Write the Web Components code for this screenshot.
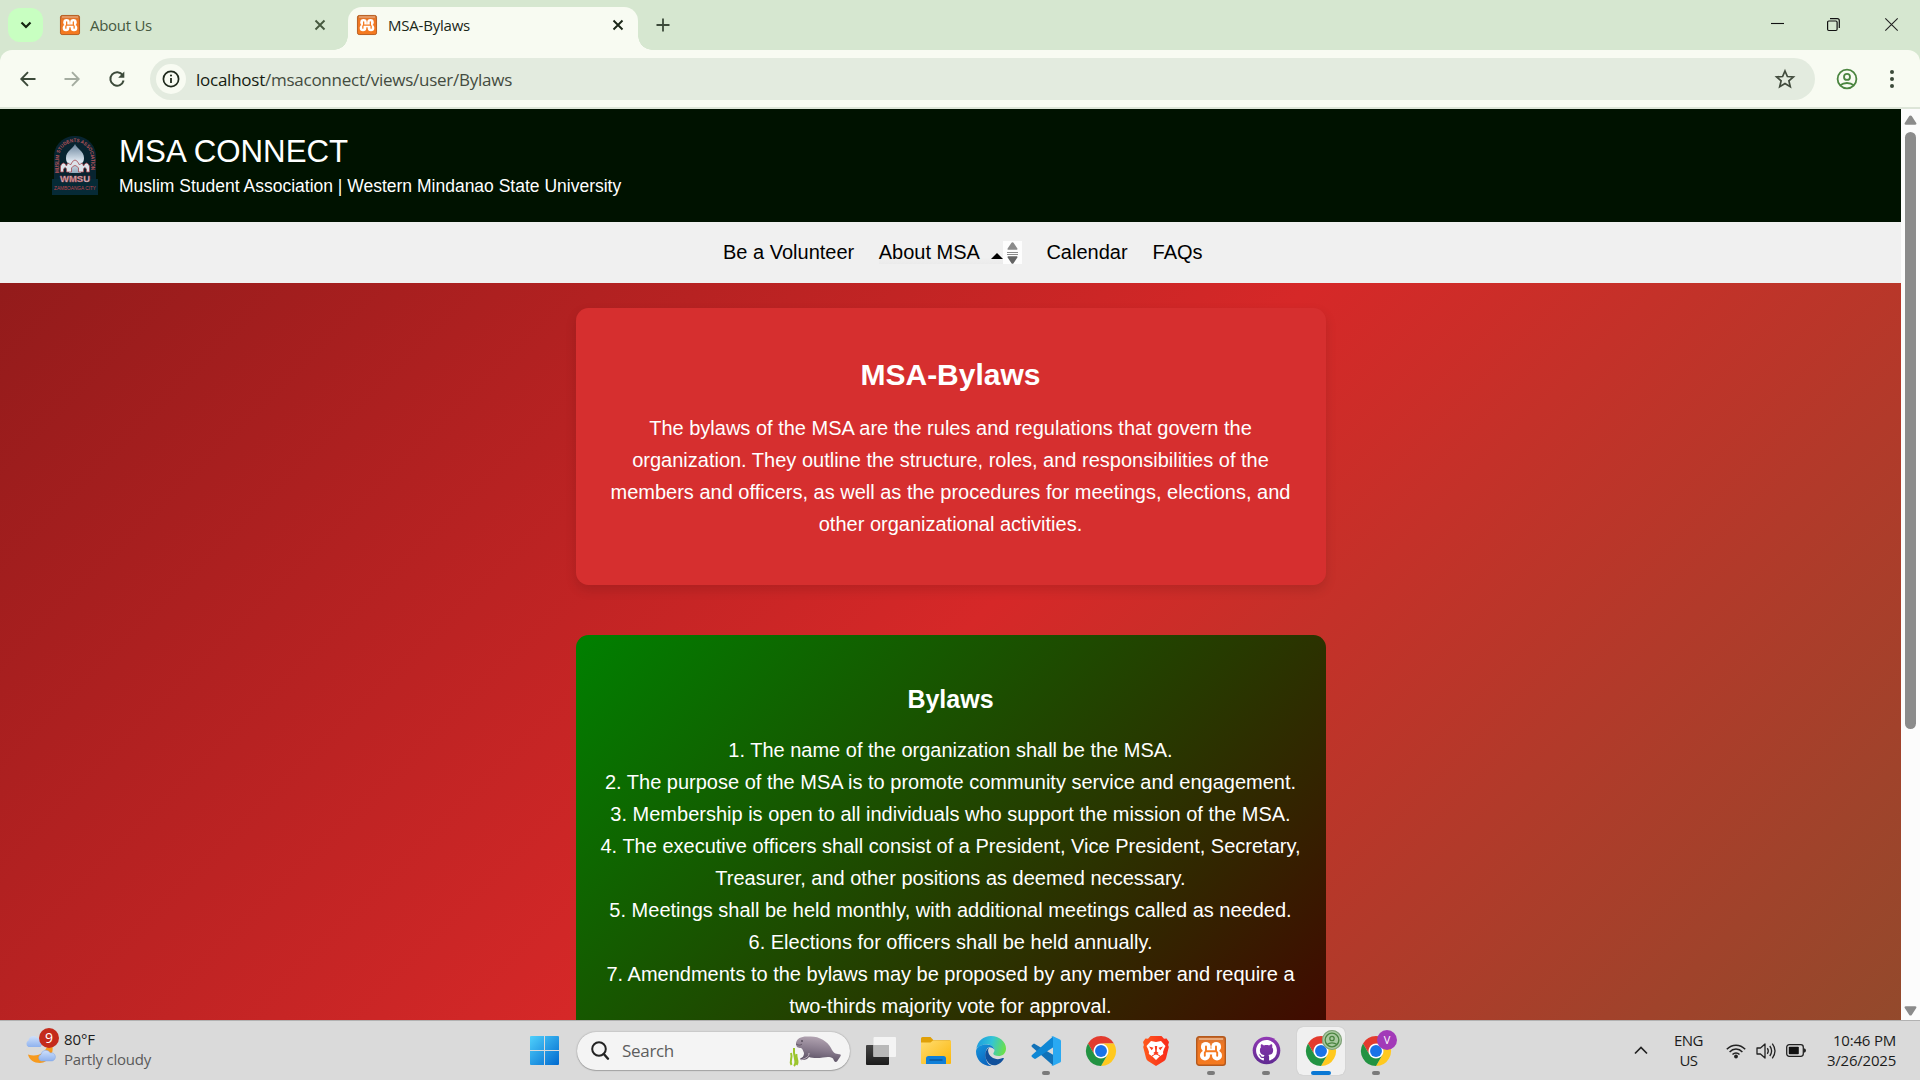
<!DOCTYPE html>
<html lang="en">
<head>
<meta charset="utf-8">
<title>MSA-Bylaws</title>
<style>
html,body{margin:0;width:1920px;height:1080px;overflow:hidden;background:#d6e7d0}
</style>
</head>
<body>
<desktop-screen></desktop-screen>

<script>
const define = (name, html, setup) => customElements.define(name, class extends HTMLElement {
  connectedCallback() {
    if (this.shadowRoot) return;
    const t = document.createElement('template');
    t.innerHTML = html;
    this.attachShadow({mode: 'open'}).appendChild(t.content.cloneNode(true));
    if (setup) setup(this);
  }
});

const UI = `font-family:"Open Sans","Noto Sans",sans-serif;`;

/* One line of text, tracked so that it fills the given width. */
define('fit-text', `<style>:host{display:block;white-space:nowrap;line-height:20px}span{display:inline-block}</style><span><slot></slot></span>`, el => {
  const s = el.shadowRoot.querySelector('span');
  const w = +el.getAttribute('w'), n = el.textContent.length;
  if (w) s.style.letterSpacing = ((w - s.getBoundingClientRect().width) / n).toFixed(3) + 'px';
});

const xampp = `<linearGradient id="x" x1="0" y1="0" x2="0" y2="1"><stop offset="0" stop-color="#c9733a"/><stop offset=".25" stop-color="#ee7623"/><stop offset="1" stop-color="#f57a20"/></linearGradient><rect x=".7" y=".7" width="28.6" height="28.6" rx="2.5" fill="url(#x)" stroke="#b5591c" stroke-width="1.4"/><path d="M3 3h24" stroke="#f3c09a" stroke-width="1.4"/><g fill="#fff"><circle cx="9.800" cy="10.800" r="4.900"/><circle cx="20.200" cy="10.800" r="4.900"/><circle cx="9" cy="19.500" r="5"/><circle cx="21" cy="19.500" r="5"/><path d="M9 12.500h12v6H9z"/></g><path d="M10 10.500v3.500q0 1.500-1.200 2.700v3M20 10.500v3.500q0 1.500 1.200 2.700v3M10 15.200h10" fill="none" stroke="#f57a20" stroke-width="1.900" stroke-linecap="round"/>`;
const chrome = `<g transform="scale(.625)"><circle cx="24" cy="24" r="12" fill="#fff"/><path fill="#e33b2e" d="M24 12H44.781A23.994 23.994 0 0 0 3.217 12.003L13.608 30l.009-.002A11.985 11.985 0 0 1 24 12Z"/><path fill="#ffc91f" d="M34.391 30.003 24.001 48A23.994 23.994 0 0 0 44.780 12.003H23.999l-.003.009A11.985 11.985 0 0 1 34.391 30.003Z"/><path fill="#229342" d="M13.609 30.003 3.218 12.006A23.994 23.994 0 0 0 24.003 48L34.393 30.003l-.007-.007a11.985 11.985 0 0 1-20.778.007Z"/><circle cx="24" cy="24" r="9.500" fill="#1a73e8"/></g>`;

const ICONS = {
  xampp: ['0 0 30 30', xampp],
  chrome: ['0 0 30 30', chrome],
  tabx: ['0 0 12 12', `<path d="M1.500 1.500l9 9M10.500 1.500l-9 9" stroke="currentColor" stroke-width="1.900" fill="none"/>`],
  plus: ['0 0 14 14', `<path d="M7 .5v13M.5 7h13" stroke="#3c4a3a" stroke-width="1.800"/>`],
  chev: ['0 0 12 8', `<path d="M1.500 1.500L6 6l4.500-4.500" stroke="#14240f" stroke-width="2.200" fill="none"/>`],
  back: ['0 0 16 16', `<path d="M15.500 8H1.500M8 1.200L1.300 8 8 14.800" stroke="currentColor" stroke-width="1.900" fill="none"/>`],
  fwd: ['0 0 16 16', `<path d="M.5 8h14M8 1.200L14.700 8 8 14.800" stroke="currentColor" stroke-width="1.900" fill="none"/>`],
  reload: ['0 0 16 16', `<path d="M13.700 4.300A6.700 6.700 0 1 0 14.600 9.500" stroke="#3c4a3a" stroke-width="2" fill="none"/><path d="M15.300.5v6.200H9.200z" fill="#3c4a3a"/>`],
  info: ['0 0 18 18', `<circle cx="9" cy="9" r="7.600" fill="none" stroke="#1f2a1c" stroke-width="1.700"/><path d="M9 8v5" stroke="#1f2a1c" stroke-width="1.800"/><circle cx="9" cy="5.500" r="1.050" fill="#1f2a1c"/>`],
  star: ['0 0 20 20', `<path d="M10 2l2.400 5.500 6 .5-4.500 3.900 1.400 5.900-5.300-3.200-5.300 3.200 1.400-5.900L1.600 8l6-.5z" fill="none" stroke="#414b3d" stroke-width="1.700"/>`],
  person: ['0 0 22 22', `<g fill="none" stroke="#4b8540" stroke-width="1.800"><circle cx="11" cy="11" r="9.400"/><circle cx="11" cy="8.900" r="3"/><path d="M4.300 17.300c3.600-3.100 9.800-3.100 13.400 0"/></g>`],
  dots: ['0 0 6 20', `<g fill="#3c4a3a"><circle cx="3" cy="3" r="2"/><circle cx="3" cy="10" r="2"/><circle cx="3" cy="17" r="2"/></g>`],
  min: ['0 0 13 13', `<path d="M0 5.500h13" stroke="#111" stroke-width="1.100"/>`],
  max: ['0 0 13 13', `<rect x=".6" y="3" width="9.500" height="9.500" rx="1.200" fill="none" stroke="#111" stroke-width="1.200"/><path d="M3 .7h7.300a2 2 0 0 1 2 2V10" fill="none" stroke="#111" stroke-width="1.200"/>`],
  close: ['0 0 13 13', `<path d="M.3.3l12.400 12.400M12.700.3L.3 12.700" stroke="#222" stroke-width="1.100"/>`],
  win: ['0 0 29 29', `<linearGradient id="w" x1="0" y1="0" x2="1" y2="1"><stop offset="0" stop-color="#4fd0fb"/><stop offset="1" stop-color="#0069cf"/></linearGradient><path fill="url(#w)" d="M1 0h13v14H0V1a1 1 0 0 1 1-1zM15 0h13a1 1 0 0 1 1 1v13H15zM0 15h14v14H1a1 1 0 0 1-1-1zM15 15h14v13a1 1 0 0 1-1 1H15z"/>`],
  search: ['0 0 18 19', `<circle cx="8" cy="8" r="6.800" fill="none" stroke="#222" stroke-width="2"/><path d="M12.800 13l4.200 4.700" stroke="#222" stroke-width="2.400" stroke-linecap="round"/>`],
  manatee: ['0 0 52 30', `<linearGradient id="m" x1=".3" y1="0" x2=".1" y2="1"><stop offset="0" stop-color="#b0a2b0"/><stop offset=".5" stop-color="#85788a"/><stop offset="1" stop-color="#51485b"/></linearGradient><path d="M7 7C8 2 13 0 20 .6 30 0 38 5 42 12c2 4 3 5.500 7 6 3 .3 3.500 1 2 3l-3 4.500c-2 1.300-3-.5-4-3-3-2-6-1.500-10-1-6 1-11 .5-14-.5-1 2-4 3-6 3-3 0-4-1.500-1-2.500 1.500-.7 2-3 2-4.500-1-2-1-4-3-5-3 0-5-.5-5-5z" fill="url(#m)"/><circle cx="13" cy="5" r=".8" fill="#2a2330"/><path d="M7 8c3 2 5 1 6 0" stroke="#655868" fill="none"/><path d="M20 17c0 4-3 5-8 7" stroke="#c3b6c2" stroke-width="1" fill="none"/><path d="M2.500 29C0 25 4 22 2 17M5 30c4-4-1-8 0-18M7.500 29c3-4-1-6 0-11" stroke="#9bc52c" stroke-width="2" fill="none"/>`],
  task: ['0 0 30 28', `<linearGradient id="t" x1="0" y1="0" x2="0" y2="1"><stop offset="0" stop-color="#444"/><stop offset="1" stop-color="#1c1c1c"/></linearGradient><rect x="0" y="8" width="23" height="20" rx="1" fill="url(#t)"/><rect x="7.500" y="0" width="22.500" height="20" rx="1" fill="#f4f4f4"/><path d="M7.500 8H23v12H7.500z" fill="#b9b9b9"/>`],
  folder: ['0 0 30 27', `<linearGradient id="f" x1="0" y1="0" x2="1" y2="1"><stop offset="0" stop-color="#ffdc70"/><stop offset="1" stop-color="#fbb70b"/></linearGradient><path d="M0 1.500A1.500 1.500 0 0 1 1.500 0h8l3 3.200H28.500a1 1 0 0 1 1 1V10H0z" fill="#e0a008"/><path d="M0 5.500h9.500l2.500-2H29a1 1 0 0 1 1 1V26a1 1 0 0 1-1 1H1a1 1 0 0 1-1-1z" fill="url(#f)"/><path d="M5 27v-5.500A2.500 2.500 0 0 1 7.500 19h15a2.500 2.500 0 0 1 2.500 2.500V27z" fill="#0f7fd8"/><path d="M8.500 23h13" stroke="#0a4f94" stroke-width="1.300"/>`],
  edge: ['0 0 30 30', `<linearGradient id="e1" x1="0" y1=".3" x2="1" y2=".5"><stop offset="0" stop-color="#1c9be0"/><stop offset=".5" stop-color="#33c4d6"/><stop offset="1" stop-color="#6be04a"/></linearGradient><linearGradient id="e2" x1="0" y1="0" x2=".6" y2="1"><stop offset="0" stop-color="#1797dd"/><stop offset="1" stop-color="#0a62bd"/></linearGradient><path d="M.3 13C1.500 5 7.500 0 15 0c8.500 0 15 6 15 12.500 0 5-3.500 7.500-7.500 7.500-3.200 0-5.200-1.200-5.200-2.300 0-.9 1.200-1.400 1.200-3.600C18.500 11 15 8.500 11 8.500 6 8.500 2 10.500.3 13z" fill="url(#e1)"/><path d="M0 15.500C0 11 5 8.400 10.500 8.400c5 0 8 3 8 5.700-1-2-3-2.900-5-2.900C7.500 11.200 8 30 17 29.800 7 31 0 24 0 15.500z" fill="url(#e2)"/><path d="M13.500 11.300C9.500 13.500 8 19 10.500 24c2 4 6 6.300 10 5 3-1 5.500-3.200 7.200-6 .4-.8-.1-1.300-.9-.9-6 3-13.500-.1-14.600-6.500-.3-1.600.2-3.200 1.300-4.300z" fill="#11519c"/>`],
  code: ['0 0 30 30', `<path d="M3 7.500L1 9a1.300 1.300 0 0 0 0 2L22 29.500l3-9z" fill="#1272b8"/><path d="M3 22.500L1 21a1.300 1.300 0 0 1 0-2L22 .5l3 9L5 22.500a1.500 1.500 0 0 1-2 0z" fill="#0f87d4"/><path d="M22 .3L29 3.500a1.800 1.800 0 0 1 1 1.600v19.800a1.800 1.800 0 0 1-1 1.600l-7 3.200c-1 .3-1.600 0-2-.5 1 .5 2 0 2-1.200V2c0-1-1-1.700-2-1.200.5-.6 1-.8 2-.5z" fill="#2aa9f2"/>`],
  brave: ['0 0 26 30', `<linearGradient id="b"><stop offset="0" stop-color="#ff5a1c"/><stop offset="1" stop-color="#f9291b"/></linearGradient><path d="M7.500 0h11L21 2.800l2.600-.2L26 6l-.9 3 .7 2-2.700 11a5 5 0 0 1-2 3L13 30l-8-5a5 5 0 0 1-2-3L.200 11l.7-2L0 6l2.400-3.400 2.600.2z" fill="url(#b)"/><path d="M8 5l5 1 5-1 4.500 5-1.500 3-1 3 .2 2-3.700 2.500L13 24l-3.500-3.500L5.800 18l.2-2-1-3-1.500-3z" fill="#fff"/><path d="M6 10.500l4.500 1.200-1.800 2.500zM20 10.500l-4.500 1.200 1.800 2.500zM11.800 10h2.400l-.5 5.500 2 1.500-2.700 1.800-2.700-1.800 2-1.500z" fill="#fb3a1b"/><path d="M9 20l4-2.300L17 20" stroke="#fb3a1b" fill="none"/>`],
  github: ['0 0 30 30', `<linearGradient id="g" x1="0" y1="0" x2="0" y2="1"><stop offset="0" stop-color="#9139b4"/><stop offset="1" stop-color="#5f2a91"/></linearGradient><circle cx="15" cy="15" r="14.300" fill="url(#g)"/><path transform="translate(4.200 4.200) scale(1.350)" fill="#fff" d="M8 0C3.580 0 0 3.580 0 8c0 3.540 2.290 6.530 5.470 7.590.4.070.55-.17.55-.38 0-.19-.01-.82-.01-1.490-2.010.37-2.530-.49-2.690-.94-.09-.23-.48-.94-.82-1.130-.28-.15-.68-.52-.01-.53.63-.01 1.080.58 1.230.82.72 1.210 1.870.87 2.330.66.070-.52.28-.87.51-1.070-1.780-.2-3.640-.89-3.640-3.950 0-.87.31-1.590.82-2.150-.08-.2-.36-1.020.08-2.120 0 0 .67-.21 2.200.82.64-.18 1.320-.27 2-.27.68 0 1.360.09 2 .27 1.530-1.040 2.200-.82 2.200-.82.44 1.100.16 1.920.08 2.120.51.56.82 1.270.82 2.150 0 3.070-1.870 3.750-3.650 3.950.29.25.54.73.54 1.480 0 1.070-.01 1.930-.01 2.200 0 .21.15.46.55.38A8.010 8.010 0 0 0 16 8c0-4.420-3.580-8-8-8z"/>`],
  up: ['0 0 14 9', `<path d="M1 7.500L7 1.500l6 6" fill="none" stroke="#222" stroke-width="1.700"/>`],
  wifi: ['0 0 20 16', `<g fill="none" stroke="#222" stroke-width="1.500"><path d="M.8 6.200c5.200-5.400 13.200-5.400 18.400 0M3.600 8.900c3.700-3.800 9.100-3.800 12.800 0M6.500 11.500c2-2 5-2 7 0"/></g><circle cx="10" cy="13.500" r="1.900" fill="#222"/>`],
  vol: ['0 0 20 18', `<g fill="none" stroke="#222" stroke-width="1.300"><path d="M1 6v6h3.500L9 16V2L4.500 6z" stroke-linejoin="round"/><path d="M11.300 6.200q2 2.800 0 5.600M13.800 4q3.600 5 0 10M16.300 1.700q5.400 7.300 0 14.600"/></g>`],
  bat: ['0 0 20 13', `<rect x=".7" y=".7" width="16.600" height="11.600" rx="2.500" fill="none" stroke="#222" stroke-width="1.300"/><rect x="2.800" y="2.800" width="10" height="7.400" rx=".8" fill="#111"/><path d="M18 4.200q2 .2 2 2.300t-2 2.300z" fill="#222"/>`],
  weather: ['0 0 31 31', `<linearGradient id="c" x1="0" y1="0" x2="0" y2="1"><stop offset="0" stop-color="#cfe0fb"/><stop offset="1" stop-color="#8fb2ee"/></linearGradient><path d="M26 11c5 8-2 20-11 20-6 0-11-3.500-12-8.500 9 3 18-1 20-11z" fill="#f79a1d"/><path d="M3.500 15a3.600 3.600 0 0 1 0-6.500 5 5 0 0 1 9-2.500c4 0 5 3 5 6l-2 3z" fill="url(#c)"/><path d="M16 29a3.500 3.500 0 0 1 0-6.600 5 5 0 0 1 9.300-1.500 4 4 0 0 1 2 8z" fill="url(#c)" stroke="#7fa6e8" stroke-width=".5"/>`],
  sup: ['0 0 14 11', `<path d="M5.700 1.200a1.500 1.500 0 0 1 2.600 0l4.900 7.700c.6 1-.1 1.800-1.100 1.800H1.900c-1 0-1.700-.8-1.100-1.800z" fill="#8b8b8b"/>`],
  sdown: ['0 0 14 11', `<path d="M5.700 9.800a1.500 1.500 0 0 0 2.600 0l4.900-7.700c.6-1-.1-1.800-1.100-1.800H1.900c-1 0-1.700.8-1.100 1.800z" fill="#8b8b8b"/>`]
};
define('ui-icon', `<style>:host{display:block;flex:none}svg{display:block;width:100%;height:100%;overflow:visible}</style>`, el => {
  const [vb, body] = ICONS[el.getAttribute('name')];
  el.style.width = el.getAttribute('w') + 'px';
  el.style.height = el.getAttribute('h') + 'px';
  const t = document.createElement('template');
  t.innerHTML = `<svg viewBox="${vb}" preserveAspectRatio="none" fill="#000">${body}</svg>`;
  el.shadowRoot.appendChild(t.content);
});

define('browser-tab', `<style>
:host{display:flex;align-items:center;box-sizing:border-box;height:43px;width:290px;padding:0 12px 7px 10px;color:#46593f;${UI}font-size:15px}
:host([active]){background:#f8fbf2;border-radius:14px 14px 0 0;color:#1b2618;position:relative;padding-left:9px}
:host([active])::before,:host([active])::after{content:"";position:absolute;bottom:0;width:14px;height:14px}
:host([active])::before{left:-14px;background:radial-gradient(circle at 0 0,transparent 13.500px,#f8fbf2 14px)}
:host([active])::after{right:-14px;background:radial-gradient(circle at 100% 0,transparent 13.500px,#f8fbf2 14px)}
.t{flex:1;margin-left:10px}
:host([active]) .t{margin-left:11px}
ui-icon[name=tabx]{margin-right:2px}
</style><ui-icon name="xampp" w="20" h="20"></ui-icon><div class="t"><slot></slot></div><ui-icon name="tabx" w="12" h="12"></ui-icon>`);

define('tab-strip', `<style>
:host{display:flex;height:50px;background:#d6e7d0;box-sizing:border-box;padding:7px 22px 0 8px}
.b{width:35px;height:34px;border-radius:12px;background:#c8ffc1;display:flex;align-items:center;justify-content:center;margin-top:1px}
browser-tab:first-of-type{margin-left:7px}
.p{margin:11px 0 0 18px}.s{flex:1}
.w{display:flex;gap:44px;padding-top:11px}
</style><div class="b"><ui-icon name="chev" w="12" h="8"></ui-icon></div>
<browser-tab><fit-text w="62">About Us</fit-text></browser-tab>
<browser-tab active style="margin-left:8px"><fit-text w="82">MSA-Bylaws</fit-text></browser-tab>
<ui-icon class="p" name="plus" w="14" h="14"></ui-icon><div class="s"></div>
<div class="w"><ui-icon name="min" w="13" h="13"></ui-icon><ui-icon name="max" w="13" h="13" style="margin:0 1px 0 -1px"></ui-icon><ui-icon name="close" w="13" h="13"></ui-icon></div>`);

define('address-bar', `<style>
:host{display:block;background:#d6e7d0}
.r{display:flex;align-items:center;height:59px;box-sizing:border-box;background:#f8fbf2;border-radius:12px 12px 0 0;border-bottom:2px solid #dde5d8;padding:0 25px 0 20px;color:#3c4a3a}
.o{flex:1;display:flex;align-items:center;height:42px;border-radius:21px;background:#e3ebdf;margin:1px 21px 0 25px;padding:0 20px 0 6px}
.i{width:30px;height:30px;border-radius:50%;background:#f8fbf2;display:flex;align-items:center;justify-content:center;margin-right:10px}
.u{flex:1;${UI}font-size:17px;color:#434b40;padding-top:1px}b{font-weight:400;color:#151b12}
</style><div class="r"><ui-icon name="back" w="16" h="16"></ui-icon><ui-icon name="fwd" w="16" h="16" style="margin-left:28px;color:#a4aca0"></ui-icon><ui-icon name="reload" w="16" h="16" style="margin-left:29px"></ui-icon>
<div class="o"><div class="i"><ui-icon name="info" w="18" h="18"></ui-icon></div><div class="u"><fit-text w="316"><b>localhost</b>/msaconnect/views/user/Bylaws</fit-text></div><ui-icon name="star" w="20" h="20"></ui-icon></div>
<ui-icon name="person" w="22" h="22"></ui-icon><ui-icon name="dots" w="6" h="20" style="margin-left:31px"></ui-icon></div>`);

define('msa-logo', `<style>:host{display:block;width:46px;height:59px}svg{display:block;overflow:visible}</style>
<svg width="46" height="59" viewBox="0 0 46 59"><linearGradient id="d" x1="0" y1="0" x2="0" y2="1"><stop offset="0" stop-color="#68829a"/><stop offset=".6" stop-color="#dfe9f2"/><stop offset="1" stop-color="#93a9bb"/></linearGradient>
<path d="M2 44V21C2 8 12 0 23 0s21 8 21 21v23z" fill="#082430"/><path d="M0 43h46v16H0z" fill="#062a36"/>
<path id="arc" d="M7 37V22a16 16 0 0 1 32 0V37" fill="none"/>
<path d="M23 8c2 5 9 7 9 14 0 4-2 5-3 6v9H17V28c-1-1-3-2-3-6 0-7 7-9 9-14z" fill="url(#d)"/>
<path d="M8.500 36V30q3-6 6 0 1-5 4-1 4.500-10 9 0 3-4 4 1 3-6 6 0v6h-3v-3q-2-3-3 0v3h-5v-4q-3.500-5-7 0v4h-5v-3q-1-3-3 0v3z" fill="#dce3ea" stroke="#a34a52" stroke-width=".8"/>
<text font-family="Liberation Sans" font-size="5" font-weight="700" fill="#b5545a"><textPath href="#arc" textLength="77" lengthAdjust="spacingAndGlyphs">MUSLIM STUDENTS ASSOCIATION</textPath></text>
<text x="8" y="45.500" font-family="Liberation Sans" font-size="9" font-weight="700" fill="#d8dfe6" stroke="#b5484e" stroke-width=".5" textLength="30" lengthAdjust="spacingAndGlyphs">WMSU</text>
<text x="2" y="54" font-family="Liberation Sans" font-size="5.500" fill="#c0484e" textLength="42" lengthAdjust="spacingAndGlyphs">ZAMBOANGA CITY</text></svg>`);

define('site-header', `<style>
:host{display:flex;box-sizing:border-box;height:113px;flex:none;background:#001200;color:#fff;padding:27px 0 0 52px}
.t{margin-left:21px}
h1{margin:-4px 0 0;font-weight:400;font-size:31.250px;line-height:40px}
p{margin:3px 0 0;font-size:17.500px;line-height:22px}
</style><msa-logo></msa-logo><div class="t"><h1>MSA CONNECT</h1><p><slot></slot></p></div>`);

define('site-nav', `<style>
:host{display:flex;height:61px;flex:none;background:#f0f0f0;color:#000;font-size:20px;line-height:23px;padding-left:723px;box-sizing:border-box;align-items:flex-start;padding-top:19px}
span{display:block}
.a{display:flex;margin:0 24.500px 0 24.500px;height:23px;background:linear-gradient(#f0f0f0 70%,#ebebeb)}
.c{border:6px solid transparent;border-top:0;border-bottom:6px solid #000;margin:12px 0 0 11px;height:0}
.s{width:19px;height:23px;background:#fdfdfd;display:flex;flex-direction:column;align-items:center;justify-content:space-between;padding:1px 0 0;box-sizing:border-box}
i{display:block;width:11px;height:3px;border:solid #8b8b8b;border-width:1px 0;box-sizing:border-box}
.d{filter:brightness(.72)}
</style><span>Be a Volunteer</span><div class="a"><span>About MSA</span><div class="c"></div><div class="s"><ui-icon name="sup" w="11" h="8"></ui-icon><i></i><ui-icon class="d" name="sdown" w="11" h="8"></ui-icon></div></div><span>Calendar</span><span style="margin-left:25px">FAQs</span>`);

define('content-card', `<style>
:host{display:block;width:750px;box-sizing:border-box;border-radius:12.500px;padding:45px 20px;text-align:center;color:#fff;font-size:20px;line-height:32px;background:#d62f2f;box-shadow:0 5px 12px rgba(0,0,0,.12)}
::slotted(h2){margin:0 0 16px;padding-top:1px;font-size:30px;line-height:42px}
::slotted(h3){margin:0 0 16px;font-size:25px;line-height:38px}
::slotted(p){margin:0}
:host([dark]){background:linear-gradient(135deg,#008000,#440500);box-shadow:none}
</style><slot></slot>`);

define('site-page', `<style>
:host{display:flex;flex-direction:column;flex:1;overflow:hidden;font-family:"Liberation Sans",Arial,sans-serif;background:#fff}
main{flex:none;height:834px;box-sizing:border-box;padding-top:25px;display:flex;flex-direction:column;align-items:center;gap:50px;background:linear-gradient(135deg,#931b1b,#d62828 48%,#8e4c2c)}
</style><site-header>Muslim Student Association | Western Mindanao State University</site-header><site-nav></site-nav>
<main><content-card style="height:277px"><h2>MSA-Bylaws</h2><p>The bylaws of the MSA are the rules and regulations that govern the<br>organization. They outline the structure, roles, and responsibilities of the<br>members and officers, as well as the procedures for meetings, elections, and<br>other organizational activities.</p></content-card>
<content-card dark style="height:432px"><h3>Bylaws</h3><p>1. The name of the organization shall be the MSA.<br>2. The purpose of the MSA is to promote community service and engagement.<br>3. Membership is open to all individuals who support the mission of the MSA.<br>4. The executive officers shall consist of a President, Vice President, Secretary,<br>Treasurer, and other positions as deemed necessary.<br>5. Meetings shall be held monthly, with additional meetings called as needed.<br>6. Elections for officers shall be held annually.<br>7. Amendments to the bylaws may be proposed by any member and require a<br>two-thirds majority vote for approval.</p></content-card></main>`);

define('scroll-bar', `<style>
:host{display:flex;flex-direction:column;align-items:center;width:19px;background:#fcfcfc;box-sizing:border-box;padding:6px 0 4px}
.t{width:11px;height:597px;border-radius:6px;background:#8b8b8b;margin-top:7px}.f{flex:1}
</style><ui-icon name="sup" w="13" h="10"></ui-icon><div class="t"></div><div class="f"></div><ui-icon name="sdown" w="13" h="10"></ui-icon>`);

define('task-item', `<style>
:host{display:flex;width:48px;height:48px;margin-right:7px;align-items:center;justify-content:center;border-radius:6px;position:relative;box-sizing:border-box}
:host([active]){background:#f0f0f0;box-shadow:0 0 1px #aaa}
.m{display:none;position:absolute;bottom:0;height:4px;border-radius:2px;width:8px;background:#7a7a7a}
:host([open]) .m{display:block}:host([active]) .m{width:20px;background:#0a78d4}
::slotted(.badge){position:absolute;left:25px;top:3px;width:20px;height:20px;border-radius:50%;display:flex;align-items:center;justify-content:center;color:#fff;font-size:11px;line-height:20px}
</style><slot></slot><div class="m"></div>`);

define('task-bar', `<style>
:host{display:flex;align-items:center;height:60px;box-sizing:border-box;border-top:1px solid #b2b2b2;background:#dadada;${UI}font-size:15px;color:#1c1c1c;padding:0 24px 0 0}
.wx{display:flex;width:505px;padding-left:25px;box-sizing:border-box;position:relative}
.wx div{margin:-3px 0 0 8px}.g{color:#5a5a5a}
.n{position:absolute;left:39px;top:-4px;width:20px;height:20px;border-radius:50%;background:#c42b1c;color:#fff;text-align:center;line-height:20px;font-size:14px}
.q{display:flex;align-items:center;width:273px;height:38px;border-radius:20px;background:#f4f4f4;box-shadow:0 0 1.500px #888,0 1px 1px #aaa;padding:0 9px 0 14px;box-sizing:border-box;margin:0 7px 0 24px;font-size:17px;color:#5d5d5d}
.l{flex:1;margin-left:13px}
.r{display:flex;align-items:center;margin-left:auto}
.c,.e{margin-top:-2px}
.c{text-align:center}.e{display:flex;flex-direction:column;align-items:flex-end}
</style>
<div class="wx"><ui-icon name="weather" w="31" h="31" style="margin-top:0"></ui-icon><span class="n">9</span><div><fit-text w="31">80°F</fit-text><fit-text class="g" w="87">Partly cloudy</fit-text></div></div>
<ui-icon name="win" w="29" h="29" style="margin-left:25px;margin-right:-6px"></ui-icon>
<div class="q"><ui-icon name="search" w="18" h="19"></ui-icon><div class="l"><fit-text w="52">Search</fit-text></div><ui-icon name="manatee" w="52" h="30"></ui-icon></div>
<task-item><ui-icon name="task" w="30" h="28"></ui-icon></task-item>
<task-item><ui-icon name="folder" w="30" h="27"></ui-icon></task-item>
<task-item><ui-icon name="edge" w="30" h="30"></ui-icon></task-item>
<task-item open><ui-icon name="code" w="30" h="30"></ui-icon></task-item>
<task-item><ui-icon name="chrome" w="30" h="30"></ui-icon></task-item>
<task-item><ui-icon name="brave" w="26" h="30"></ui-icon></task-item>
<task-item open><ui-icon name="xampp" w="30" h="30"></ui-icon></task-item>
<task-item open><ui-icon name="github" w="29" h="29"></ui-icon></task-item>
<task-item open active><ui-icon name="chrome" w="30" h="30"></ui-icon><span class="badge" style="background:#a9c9a0;box-shadow:inset 0 0 0 1px #7f9f78"><ui-icon name="person" w="16" h="16"></ui-icon></span></task-item>
<task-item open><ui-icon name="chrome" w="30" h="30"></ui-icon><span class="badge" style="background:#a23ab8">V</span></task-item>
<div class="r"><ui-icon name="up" w="14" h="9" style="margin-right:26px"></ui-icon>
<div class="c" style="margin-right:23px"><fit-text w="29">ENG</fit-text><fit-text w="18">US</fit-text></div>
<ui-icon name="wifi" w="20" h="16" style="margin-right:10px"></ui-icon><ui-icon name="vol" w="20" h="18" style="margin-right:10px"></ui-icon><ui-icon name="bat" w="20" h="13" style="margin-right:21px"></ui-icon>
<div class="e"><fit-text w="63">10:46 PM</fit-text><fit-text w="69">3/26/2025</fit-text></div></div>`);

define('desktop-screen', `<style>
:host{display:flex;flex-direction:column;width:1920px;height:1080px;overflow:hidden}
.v{display:flex;height:911px;flex:none}
</style><tab-strip></tab-strip><address-bar></address-bar><div class="v"><site-page></site-page><scroll-bar></scroll-bar></div><task-bar></task-bar>`);
</script>
</body>
</html>
